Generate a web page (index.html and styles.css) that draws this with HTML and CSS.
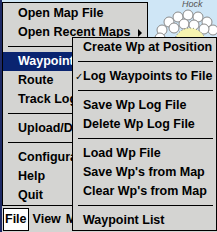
FILE: index.html
```html
<!DOCTYPE html>
<html>
<head>
<meta charset="utf-8">
<link rel="stylesheet" href="styles.css">
</head>
<body>
<div class="screen">
  <svg class="map" width="217" height="232" viewBox="0 0 217 232">
    <rect width="217" height="232" fill="#cfe6f6"/>
    <text x="180" y="7" class="map-label">Hock</text>
    <g fill="#fff" stroke="#8a8a8a" stroke-width="1">
      <circle cx="160" cy="30" r="5"/>
      <circle cx="167" cy="22" r="5"/>
      <circle cx="176" cy="17" r="5"/>
      <circle cx="186" cy="15" r="5"/>
      <circle cx="196" cy="17" r="5"/>
      <circle cx="205" cy="22" r="5"/>
      <circle cx="211" cy="30" r="5"/>
      <circle cx="158" cy="38" r="5"/>
      <circle cx="172" cy="28" r="5"/>
      <circle cx="182" cy="24" r="5"/>
      <circle cx="192" cy="25" r="5"/>
      <circle cx="202" cy="29" r="5"/>
    </g>
    <circle cx="188" cy="44" r="16" fill="#f6f3b0" stroke="#777" stroke-width="1" stroke-dasharray="1 2"/>
  </svg>

  <div class="content">
    <div class="spacer"></div>
    <div class="menubar">
      <span class="mb-item active">File</span>
      <span class="mb-item">View</span>
      <span class="mb-item">Map</span>
    </div>
  </div>

  <div class="menu main-menu">
    <div class="item">Open Map File</div>
    <div class="item has-sub">Open Recent Maps<span class="arrow"></span></div>
    <div class="sep"></div>
    <div class="item selected">Waypoints</div>
    <div class="item">Route</div>
    <div class="item">Track Log</div>
    <div class="sep"></div>
    <div class="item">Upload/Download</div>
    <div class="sep"></div>
    <div class="item">Configuration</div>
    <div class="item">Help</div>
    <div class="item">Quit</div>
  </div>

  <div class="menu sub-menu">
    <div class="item">Create Wp at Position</div>
    <div class="sep"></div>
    <div class="item checked"><span class="check">✓</span>Log Waypoints to File</div>
    <div class="sep"></div>
    <div class="item">Save Wp Log File</div>
    <div class="item">Delete Wp Log File</div>
    <div class="sep"></div>
    <div class="item">Load Wp File</div>
    <div class="item">Save Wp's from Map</div>
    <div class="item">Clear Wp's from Map</div>
    <div class="sep"></div>
    <div class="item">Waypoint List</div>
  </div>
</div>
</body>
</html>
```

FILE: styles.css
```css
html, body {
  margin: 0;
  padding: 0;
}
body {
  width: 217px;
  height: 232px;
  overflow: hidden;
  font-family: "Liberation Sans", Arial, sans-serif;
  font-weight: bold;
  font-size: 12.5px;
  color: #000;
}
.screen {
  position: relative;
  width: 217px;
  height: 232px;
  overflow: hidden;
  box-sizing: border-box;
  border-left: 2px solid #1e2a66;
}
.map {
  position: absolute;
  left: 0;
  top: 0;
}
.map-label {
  font-family: "Liberation Sans", Arial, sans-serif;
  font-style: italic;
  font-weight: normal;
  font-size: 9px;
  fill: #555;
}
.content {
  position: relative;
  height: 100%;
  display: flex;
  flex-direction: column;
}
.spacer {
  flex: 1;
}
.menubar {
  height: 26px;
  background: #d4d4d2;
  display: flex;
  align-items: center;
  gap: 3px;
  padding-left: 1px;
  white-space: nowrap;
  overflow: hidden;
}
.mb-item {
  height: 21px;
  line-height: 21px;
  padding: 0 1px;
}
.mb-item.active {
  background: #fff;
  border: 1px solid #000;
  padding: 0 1px;
}
.menu {
  position: absolute;
  background: #d4d4d2;
  border: 1px solid #000;
  white-space: nowrap;
  overflow: hidden;
}
.main-menu {
  left: 0;
  top: 2px;
  width: 144px;
  padding-top: 1px;
}
.sub-menu {
  left: 70px;
  top: 37px;
  width: 143px;
}
.item {
  height: 19px;
  line-height: 19px;
  position: relative;
}
.main-menu .item {
  padding-left: 15px;
}
.sub-menu .item {
  padding-left: 10px;
}
.item.selected {
  background: #0a2470;
  color: #fff;
}
.check {
  position: absolute;
  left: 2px;
  top: 0;
  font-family: "DejaVu Sans", sans-serif;
  font-size: 10px;
}
.arrow {
  position: absolute;
  right: 5px;
  top: 6px;
  width: 0;
  height: 0;
  border-top: 4px solid transparent;
  border-bottom: 4px solid transparent;
  border-left: 4px solid #000;
}
.sep {
  height: 10px;
  position: relative;
}
.sep::after {
  content: "";
  position: absolute;
  left: 5px;
  right: 3px;
  top: 4px;
  height: 1px;
  background: #000;
}
```
